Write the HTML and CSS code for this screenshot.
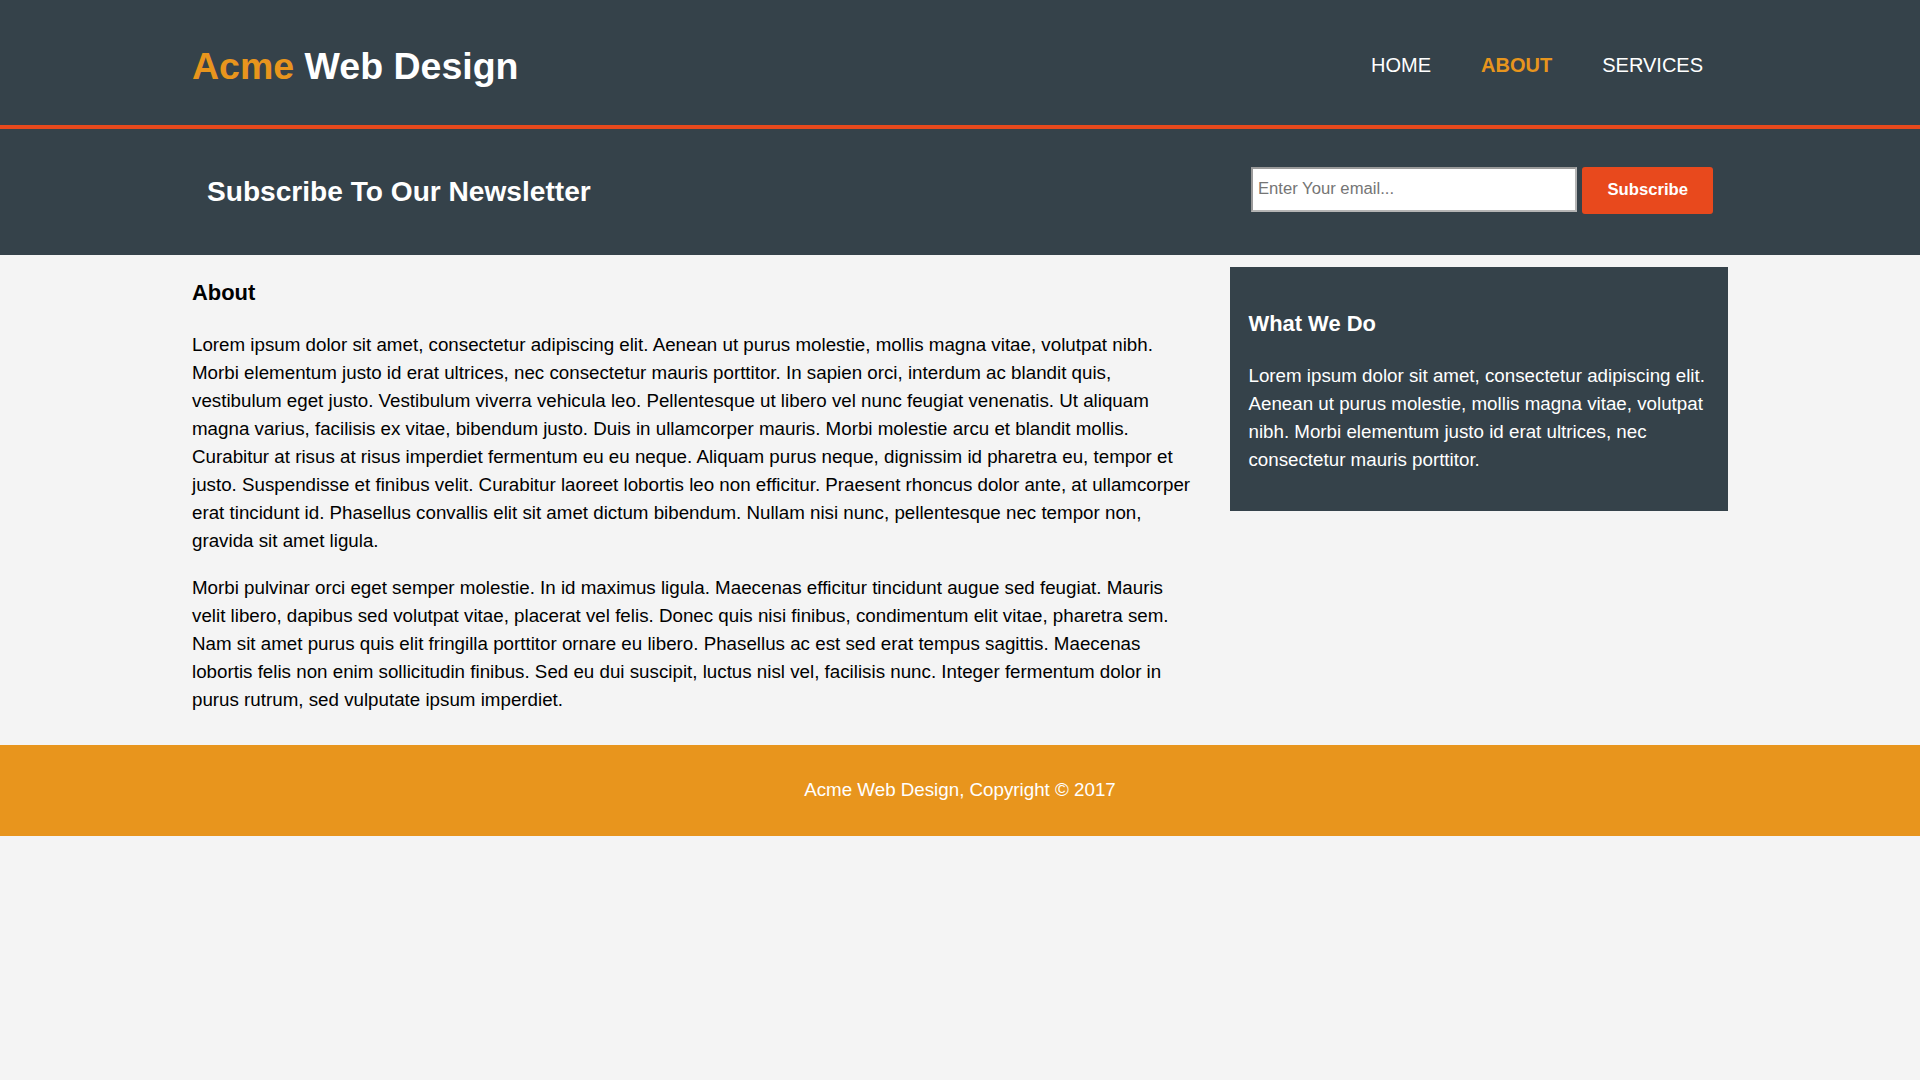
FILE: index.html
```html
<!DOCTYPE html>
<html lang="en">
<head>
<meta charset="utf-8">
<title>Acme Web Design | About</title>
<link rel="stylesheet" href="styles.css">
</head>
<body>
<header class="site-header">
  <div class="container header-inner">
    <div class="branding">
      <h1 class="logo"><span class="highlight">Acme</span> Web Design</h1>
    </div>
    <nav class="main-nav">
      <ul class="nav-list">
        <li class="nav-item"><a class="nav-link" href="#">Home</a></li>
        <li class="nav-item current"><a class="nav-link" href="#">About</a></li>
        <li class="nav-item"><a class="nav-link" href="#">Services</a></li>
      </ul>
    </nav>
  </div>
</header>

<section class="newsletter">
  <div class="container newsletter-inner">
    <h1 class="newsletter-title">Subscribe To Our Newsletter</h1>
    <form class="newsletter-form">
      <input class="email-input" type="email" placeholder="Enter Your email...">
      <button class="button-1" type="submit">Subscribe</button>
    </form>
  </div>
</section>

<section class="main">
  <div class="container main-inner">
    <article class="main-col">
      <h1 class="page-title">About</h1>
      <p class="text">Lorem ipsum dolor sit amet, consectetur adipiscing elit. Aenean ut purus molestie, mollis magna vitae, volutpat nibh. Morbi elementum justo id erat ultrices, nec consectetur mauris porttitor. In sapien orci, interdum ac blandit quis, vestibulum eget justo. Vestibulum viverra vehicula leo. Pellentesque ut libero vel nunc feugiat venenatis. Ut aliquam magna varius, facilisis ex vitae, bibendum justo. Duis in ullamcorper mauris. Morbi molestie arcu et blandit mollis. Curabitur at risus at risus imperdiet fermentum eu eu neque. Aliquam purus neque, dignissim id pharetra eu, tempor et justo. Suspendisse et finibus velit. Curabitur laoreet lobortis leo non efficitur. Praesent rhoncus dolor ante, at ullamcorper erat tincidunt id. Phasellus convallis elit sit amet dictum bibendum. Nullam nisi nunc, pellentesque nec tempor non, gravida sit amet ligula.</p>
      <p class="text">Morbi pulvinar orci eget semper molestie. In id maximus ligula. Maecenas efficitur tincidunt augue sed feugiat. Mauris velit libero, dapibus sed volutpat vitae, placerat vel felis. Donec quis nisi finibus, condimentum elit vitae, pharetra sem. Nam sit amet purus quis elit fringilla porttitor ornare eu libero. Phasellus ac est sed erat tempus sagittis. Maecenas lobortis felis non enim sollicitudin finibus. Sed eu dui suscipit, luctus nisl vel, facilisis nunc. Integer fermentum dolor in purus rutrum, sed vulputate ipsum imperdiet.</p>
    </article>
    <aside class="sidebar dark">
      <h3 class="sidebar-title">What We Do</h3>
      <p class="text">Lorem ipsum dolor sit amet, consectetur adipiscing elit. Aenean ut purus molestie, mollis magna vitae, volutpat nibh. Morbi elementum justo id erat ultrices, nec consectetur mauris porttitor.</p>
    </aside>
  </div>
</section>

<footer class="site-footer">Acme Web Design, Copyright &copy; 2017</footer>
</body>
</html>
```

FILE: styles.css
```css
html, body {
  margin: 0;
  padding: 0;
}

body {
  font-family: "Liberation Sans", Arial, Helvetica, sans-serif;
  font-size: 18.75px;
  line-height: 28px;
  background-color: #f4f4f4;
  color: #000000;
}

.container {
  width: 80%;
  margin: 0 auto;
}

/* Header */
.site-header {
  background: #35424a;
  color: #ffffff;
  padding-top: 37.5px;
  min-height: 87.5px;
  border-bottom: 4px solid #e8491d;
}

.header-inner {
  display: flex;
  justify-content: space-between;
  align-items: flex-start;
}

.logo {
  margin: 0;
  font-size: 37.5px;
  line-height: 56px;
  font-weight: bold;
}

.highlight {
  color: #e8951d;
}

.main-nav {
  margin-top: 12.5px;
}

.nav-list {
  list-style: none;
  margin: 0;
  padding: 0;
  display: flex;
}

.nav-item {
  padding: 0 25px;
}

.nav-link {
  color: #ffffff;
  text-decoration: none;
  text-transform: uppercase;
  font-size: 20px;
  line-height: 30px;
}

.current .nav-link {
  color: #e8951d;
  font-weight: bold;
}

/* Newsletter */
.newsletter {
  padding: 18.75px;
  color: #ffffff;
  background: #35424a;
}

.newsletter-inner {
  display: flex;
  justify-content: space-between;
  align-items: flex-start;
}

.newsletter-title {
  margin: 23.34px 0;
  font-size: 28.125px;
  line-height: 42px;
  font-weight: bold;
}

.newsletter-form {
  margin: 18.75px 0 0 0;
  display: flex;
  align-items: flex-start;
  gap: 5px;
}

.email-input {
  box-sizing: content-box;
  width: 312.5px;
  height: 31.25px;
  padding: 5px;
  border: 2px solid #b5b5b5;
  border-top-color: #9a9a9a;
  border-left-color: #9a9a9a;
  background: #ffffff;
  font-family: "Liberation Sans", Arial, sans-serif;
  font-size: 16.67px;
  color: #000000;
  outline: none;
}

.email-input::placeholder {
  color: #757575;
}

.button-1 {
  height: 47.5px;
  background: #e8491d;
  border: 0;
  border-radius: 3px;
  padding: 0 25px;
  color: #ffffff;
  font-family: "Liberation Sans", Arial, sans-serif;
  font-size: 16.67px;
  font-weight: bold;
}

/* Main */
.main-inner {
  display: flex;
  justify-content: space-between;
  align-items: flex-start;
}

.main-col {
  width: 65%;
  flex: none;
}

.page-title {
  font-size: 21.9375px;
  margin: 21.9375px 0;
  line-height: 32px;
  font-weight: bold;
}

.text {
  margin: 18.75px 0;
}

.sidebar {
  width: 30%;
  flex: none;
  box-sizing: content-box;
  margin-top: 12px;
}

.dark {
  padding: 18.75px;
  background: #35424a;
  color: #ffffff;
}

.sidebar-title {
  font-size: 21.9375px;
  margin: 21.9375px 0;
  line-height: 32px;
  font-weight: bold;
}

/* Footer */
.site-footer {
  padding: 31.25px;
  margin-top: 12.5px;
  color: #ffffff;
  background-color: #e8951d;
  text-align: center;
}
```
